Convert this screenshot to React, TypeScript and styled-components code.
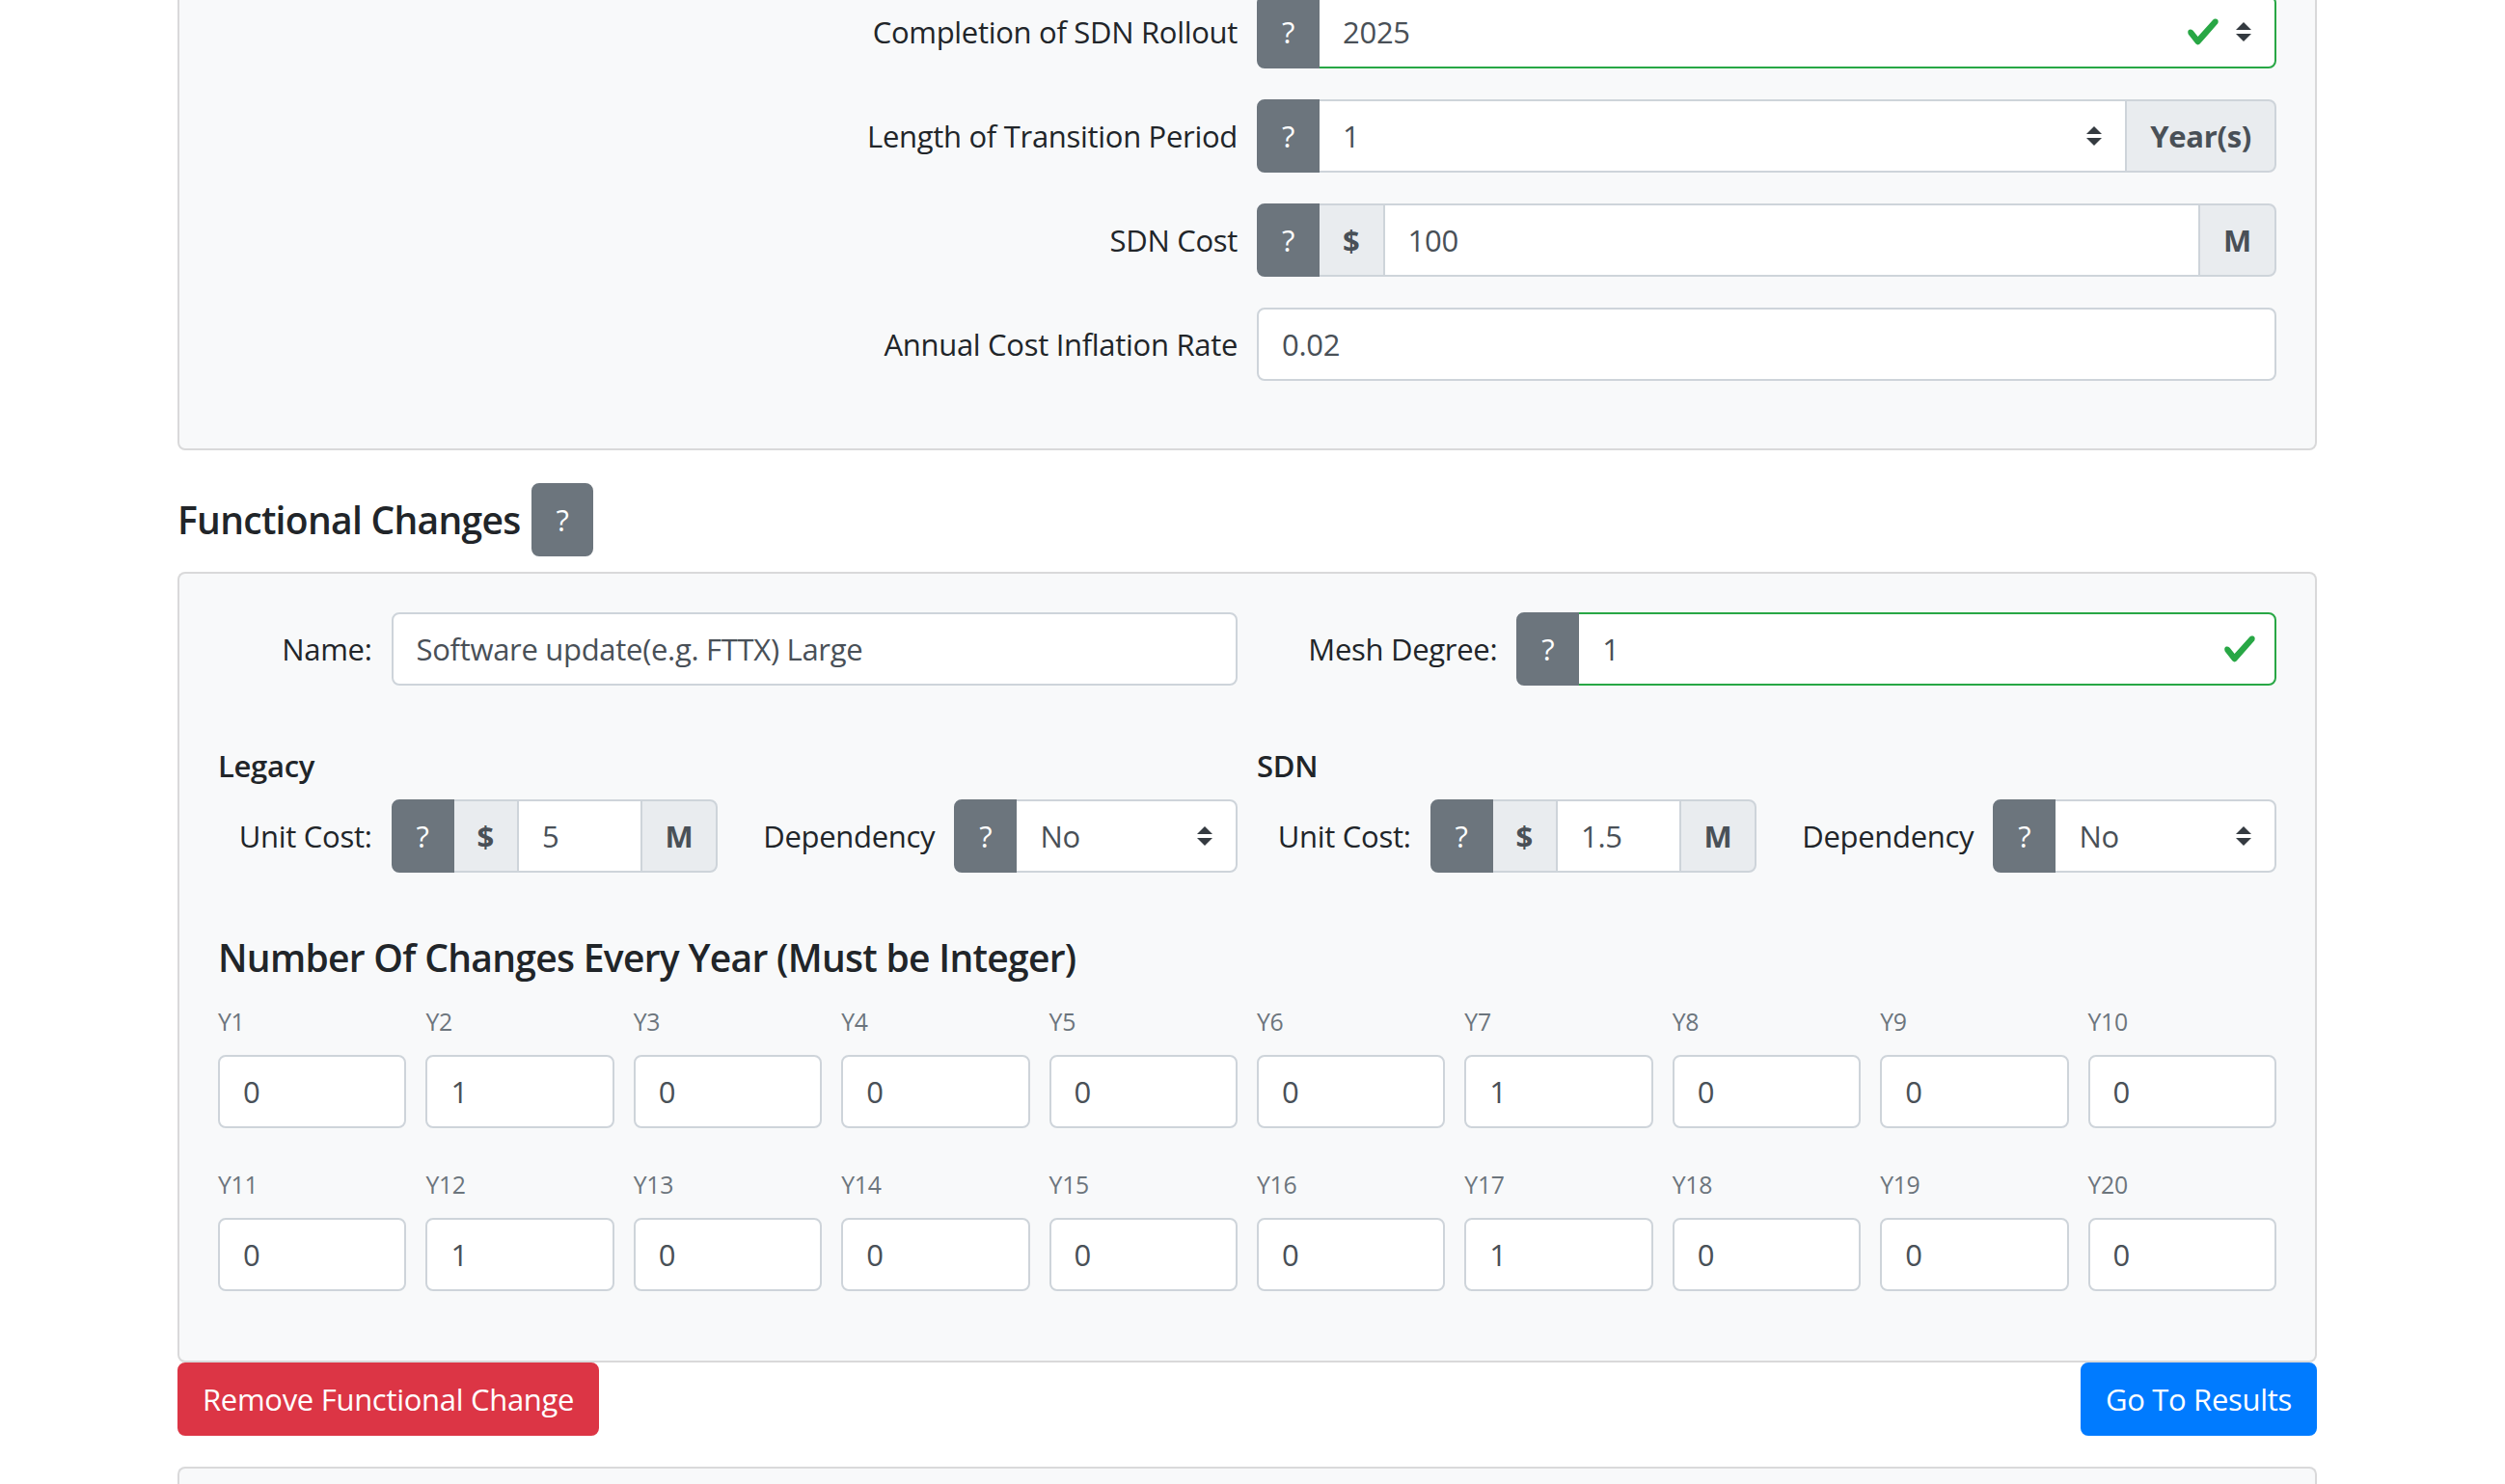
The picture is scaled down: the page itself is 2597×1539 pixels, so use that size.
import React from 'react';
import styled, { createGlobalStyle } from 'styled-components';

const GlobalStyle = createGlobalStyle`
  html, body { margin: 0; padding: 0; background: #fff; overflow: hidden; }
  body {
    font-family: "Open Sans", "Noto Sans", sans-serif;
    font-size: 31px;
    line-height: 48px;
    letter-spacing: -0.3px;
    color: #212529;
  }
  *, *::before, *::after { box-sizing: border-box; }
  input, select, button { letter-spacing: inherit; }
`;

const Page = styled.div`
  padding-right: 11px;
  margin-top: -47px;
`;

const Container = styled.div`
  max-width: 2218px;
  margin: 0 auto;
`;

const Card = styled.section<{ $tail?: boolean; $pb?: number }>`
  background: #f8f9fa;
  border: 2px solid rgba(0, 0, 0, 0.125);
  border-radius: 8px;
  padding: 40px 40px ${(p) => p.$pb ?? 40}px;
  margin-top: ${(p) => (p.$tail ? '32px' : '0')};
  min-height: ${(p) => (p.$tail ? '200px' : 'auto')};
`;

const Row = styled.div<{ $mb?: number }>`
  display: flex;
  align-items: flex-start;
  margin: 0 -10px ${(p) => (p.$mb ?? 32)}px;
`;

const Col = styled.div<{ $w: number }>`
  flex: 0 0 ${(p) => p.$w}%;
  max-width: ${(p) => p.$w}%;
  padding: 0 10px;
`;

const FieldLabel = styled.label`
  display: block;
  margin: 0;
  padding: 14px 0;
  line-height: 48px;
  text-align: right;
  white-space: nowrap;
`;

const Group = styled.div`
  display: flex;
  align-items: stretch;
  width: 100%;
  height: 76px;
`;

const Btn = styled.button<{ $tone: 'secondary' | 'danger' | 'primary' }>`
  display: inline-flex;
  align-items: center;
  justify-content: center;
  padding: 12px 24px;
  font-family: inherit;
  font-size: 31px;
  line-height: 48px;
  font-weight: 400;
  color: #fff;
  border: 2px solid
    ${(p) => (p.$tone === 'danger' ? '#dc3545' : p.$tone === 'primary' ? '#007bff' : '#6c757d')};
  background: ${(p) => (p.$tone === 'danger' ? '#dc3545' : p.$tone === 'primary' ? '#007bff' : '#6c757d')};
  border-radius: 8px;
  cursor: pointer;
`;

const HelpBtn = styled(Btn)`
  border-radius: 8px 0 0 8px;
  flex: 0 0 auto;
  position: relative;
  z-index: 1;
`;

const Addon = styled.span<{ $last?: boolean }>`
  display: flex;
  align-items: center;
  flex: 0 0 auto;
  padding: 12px 24px;
  margin-left: -2px;
  background: #e9ecef;
  border: 2px solid #ced4da;
  color: #495057;
  font-weight: 700;
  line-height: 48px;
  border-radius: ${(p) => (p.$last ? '0 8px 8px 0' : '0')};
`;

type Round = 'none' | 'right' | 'all';
const radius = (r?: Round) => (r === 'all' ? '8px' : r === 'right' ? '0 8px 8px 0' : '0');

const TextInput = styled.input<{ $round?: Round; $valid?: boolean; $joined?: boolean }>`
  display: block;
  width: 100%;
  min-width: 0;
  height: 76px;
  padding: 12px ${(p) => (p.$valid ? '72px' : '24px')} 12px 24px;
  margin-left: ${(p) => (p.$joined ? '-2px' : '0')};
  font-family: inherit;
  font-size: 31px;
  line-height: 48px;
  color: #495057;
  background: #fff;
  border: 2px solid ${(p) => (p.$valid ? '#28a745' : '#ced4da')};
  border-radius: ${(p) => radius(p.$round)};
  outline: none;
`;

const FieldBox = styled.div`
  position: relative;
  flex: 1 1 auto;
  min-width: 0;
  margin-left: -2px;
  display: flex;
`;

const Select = styled.select<{ $round?: Round; $valid?: boolean }>`
  appearance: none;
  -webkit-appearance: none;
  width: 100%;
  height: 76px;
  padding: 12px ${(p) => (p.$valid ? '98px' : '56px')} 12px 24px;
  font-family: inherit;
  font-size: 31px;
  line-height: 48px;
  color: #495057;
  background: #fff;
  border: 2px solid ${(p) => (p.$valid ? '#28a745' : '#ced4da')};
  border-radius: ${(p) => radius(p.$round)};
  outline: none;
`;

const Overlay = styled.svg<{ $right: number; $w: number; $h: number }>`
  position: absolute;
  top: 50%;
  right: ${(p) => p.$right}px;
  width: ${(p) => p.$w}px;
  height: ${(p) => p.$h}px;
  transform: translateY(-50%);
  pointer-events: none;
`;

const Check = ({ right }: { right: number }) => (
  <Overlay $right={right} $w={36} $h={36} viewBox="0 0 8 8">
    <path
      fill="#28a745"
      d="M2.3 6.73L.6 4.53c-.4-1.04.46-1.4 1.1-.8l1.1 1.4 3.4-3.8c.6-.63 1.6-.27 1.2.7l-4 4.6c-.43.5-.8.4-1.1.1z"
    />
  </Overlay>
);

const Arrows = () => (
  <Overlay $right={26} $w={16} $h={20} viewBox="0 0 4 5">
    <path fill="#343a40" d="M2 0L0 2h4zm0 5L0 3h4z" />
  </Overlay>
);

const PickBox = ({ value, valid, round }: { value: string; valid?: boolean; round?: Round }) => (
  <FieldBox>
    <Select $valid={valid} $round={round} defaultValue={value}>
      <option value={value}>{value}</option>
    </Select>
    {valid && <Check right={58} />}
    <Arrows />
  </FieldBox>
);

const TitleLine = styled.h5<{ $top: number }>`
  display: flex;
  align-items: center;
  gap: 11px;
  margin: ${(p) => p.$top}px 0 16px;
  font-size: 39px;
  font-weight: 600;
  line-height: 48px;
  letter-spacing: -0.7px;
`;

const SubTitle = styled.h6`
  margin: 32px 0 16px;
  font-size: 31px;
  font-weight: 600;
  line-height: 38px;
`;

const YearLabel = styled.label`
  display: block;
  height: 48px;
  margin-bottom: 13px;
  line-height: 48px;
`;

const YearTag = styled.small`
  font-size: 80%;
  line-height: 1;
  color: #6c757d;
`;

const Actions = styled.div`
  display: flex;
  justify-content: space-between;
  align-items: flex-start;
`;

const topRows = [
  'Completion of SDN Rollout',
  'Length of Transition Period',
  'SDN Cost',
  'Annual Cost Inflation Rate',
];

const years1 = [0, 1, 0, 0, 0, 0, 1, 0, 0, 0];
const years2 = [0, 1, 0, 0, 0, 0, 1, 0, 0, 0];

const CostBlock = ({ title, cost }: { title: string; cost: string }) => (
  <>
    <SubTitle>{title}</SubTitle>
    <Row>
      <Col $w={16.667}>
        <FieldLabel>Unit Cost:</FieldLabel>
      </Col>
      <Col $w={33.333}>
        <Group>
          <HelpBtn $tone="secondary">?</HelpBtn>
          <Addon>$</Addon>
          <TextInput $joined defaultValue={cost} />
          <Addon $last>M</Addon>
        </Group>
      </Col>
      <Col $w={20.88}>
        <FieldLabel>Dependency</FieldLabel>
      </Col>
      <Col $w={29.12}>
        <Group>
          <HelpBtn $tone="secondary">?</HelpBtn>
          <PickBox value="No" round="right" />
        </Group>
      </Col>
    </Row>
  </>
);

const YearRow = ({ start, values }: { start: number; values: number[] }) => (
  <Row>
    {values.map((v, i) => (
      <Col $w={10} key={i}>
        <YearLabel>
          <YearTag>Y{start + i}</YearTag>
        </YearLabel>
        <TextInput $round="all" defaultValue={String(v)} />
      </Col>
    ))}
  </Row>
);

export default function App() {
  return (
    <>
      <GlobalStyle />
      <Page>
        <Container>
          <Card $pb={38}>
            <Row>
              <Col $w={50}>
                <FieldLabel>{topRows[0]}</FieldLabel>
              </Col>
              <Col $w={50}>
                <Group>
                  <HelpBtn $tone="secondary">?</HelpBtn>
                  <PickBox value="2025" valid round="right" />
                </Group>
              </Col>
            </Row>
            <Row>
              <Col $w={50}>
                <FieldLabel>{topRows[1]}</FieldLabel>
              </Col>
              <Col $w={50}>
                <Group>
                  <HelpBtn $tone="secondary">?</HelpBtn>
                  <PickBox value="1" round="none" />
                  <Addon $last>Year(s)</Addon>
                </Group>
              </Col>
            </Row>
            <Row>
              <Col $w={50}>
                <FieldLabel>{topRows[2]}</FieldLabel>
              </Col>
              <Col $w={50}>
                <Group>
                  <HelpBtn $tone="secondary">?</HelpBtn>
                  <Addon>$</Addon>
                  <TextInput $joined defaultValue="100" />
                  <Addon $last>M</Addon>
                </Group>
              </Col>
            </Row>
            <Row>
              <Col $w={50}>
                <FieldLabel>{topRows[3]}</FieldLabel>
              </Col>
              <Col $w={50}>
                <TextInput $round="all" defaultValue="0.02" />
              </Col>
            </Row>
          </Card>

          <TitleLine $top={34}>
            Functional Changes
            <Btn $tone="secondary">?</Btn>
          </TitleLine>

          <Card>
            <Row>
              <Col $w={50}>
                <Row $mb={0}>
                  <Col $w={16.667}>
                    <FieldLabel>Name:</FieldLabel>
                  </Col>
                  <Col $w={83.333}>
                    <TextInput $round="all" defaultValue="Software update(e.g. FTTX) Large" />
                  </Col>
                </Row>
              </Col>
              <Col $w={50}>
                <Row $mb={0}>
                  <Col $w={25}>
                    <FieldLabel>Mesh Degree:</FieldLabel>
                  </Col>
                  <Col $w={75}>
                    <Group>
                      <HelpBtn $tone="secondary">?</HelpBtn>
                      <FieldBox>
                        <TextInput $valid $round="right" defaultValue="1" />
                        <Check right={20} />
                      </FieldBox>
                    </Group>
                  </Col>
                </Row>
              </Col>
            </Row>

            <Row $mb={0}>
              <Col $w={50}>
                <CostBlock title="Legacy" cost="5" />
              </Col>
              <Col $w={50}>
                <CostBlock title="SDN" cost="1.5" />
              </Col>
            </Row>

            <TitleLine $top={32}>Number Of Changes Every Year (Must be Integer)</TitleLine>
            <YearRow start={1} values={years1} />
            <YearRow start={11} values={years2} />
          </Card>

          <Actions>
            <Btn $tone="danger">Remove Functional Change</Btn>
            <Btn $tone="primary">Go To Results</Btn>
          </Actions>

          <Card $tail />
        </Container>
      </Page>
    </>
  );
}
